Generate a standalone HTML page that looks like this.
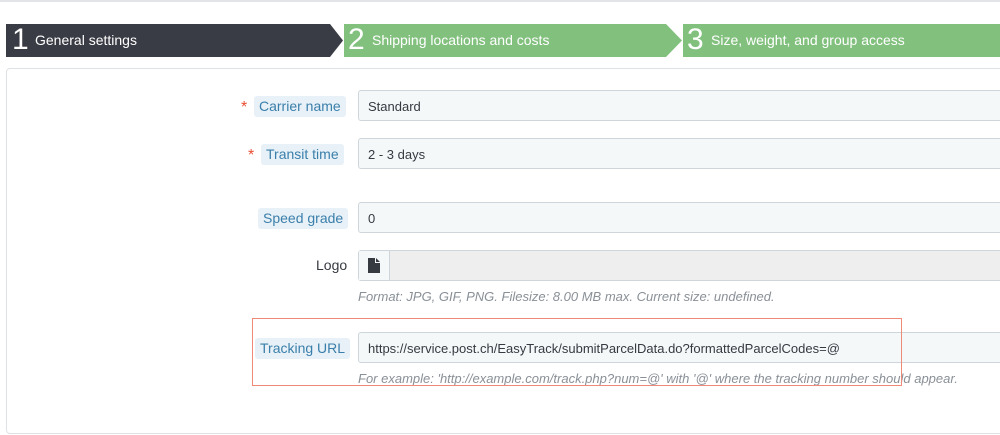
<!DOCTYPE html><html><head><style>
body{margin:0;width:1000px;height:435px;overflow:hidden;background:#fff;font-family:"Liberation Sans",sans-serif;position:relative}
.a{position:absolute}
.topl{left:0;top:0;width:1000px;height:2px;background:#e2e4e7}
.step{position:absolute;top:24px;height:33px;color:#fff;font-size:14px;line-height:33px}
.num{font-size:30px;font-weight:300;position:absolute;top:-1px}
.panel{left:6px;top:68px;width:1010px;height:364px;border:1px solid #dfe2e5;border-radius:4px}
.inp{position:absolute;left:358px;width:660px;height:31px;background:#f5f8f9;border:1px solid #cfd6db;border-radius:3px;font-size:13px;color:#363a41;line-height:31px;padding-left:9px;box-sizing:border-box}
.lbl{position:absolute;font-size:14px;color:#3a7fab;background:#e8f1f7;border-radius:3px;padding:0 5px;height:21px;line-height:21px}
.star{position:absolute;color:#e84e33;font-size:16px}
.help{position:absolute;left:358px;font-size:13px;font-style:italic;color:#8a9097;white-space:nowrap}
</style></head><body>
<div class="a topl"></div>
<svg class="a" style="left:0;top:24px" width="1000" height="33">
<polygon points="6,0 330,0 343,16.5 330,33 6,33" fill="#393c44"/>
<polygon points="344,0 666,0 682,16.5 666,33 344,33 344,33" fill="#82c07e"/>
<polygon points="683,0 1000,0 1000,33 683,33" fill="#82c07e"/>
</svg>
<div class="step" style="left:12px"><span class="num">1</span><span style="position:absolute;left:23px;white-space:nowrap">General settings</span></div>
<div class="step" style="left:348px"><span class="num">2</span><span style="position:absolute;left:24px;white-space:nowrap">Shipping locations and costs</span></div>
<div class="step" style="left:687px"><span class="num">3</span><span style="position:absolute;left:24px;white-space:nowrap">Size, weight, and group access</span></div>
<div class="a panel"></div>
<span class="star" style="left:241px;top:99px">*</span><div class="lbl" style="left:254px;top:96px">Carrier name</div>
<div class="inp" style="top:90px">Standard</div>
<span class="star" style="left:248px;top:147px">*</span><div class="lbl" style="left:261px;top:144px">Transit time</div>
<div class="inp" style="top:138px">2 - 3 days</div>
<div class="lbl" style="left:258px;top:208px">Speed grade</div>
<div class="inp" style="top:202px">0</div>
<div class="a" style="left:316px;top:257px;font-size:14px;color:#363a41">Logo</div>
<div class="inp" style="top:250px;background:#eeeeee;padding:0"><div style="position:absolute;left:0;top:0;width:30px;height:29px;background:#f5f8f9;border-right:1px solid #cfd6db"></div>
<svg class="a" style="left:9px;top:7px" width="12" height="15"><path d="M0 0H7V5H12V15H0Z M8 0L12 4H8Z" fill="#363a41"/></svg></div>
<div class="help" style="top:289px">Format: JPG, GIF, PNG. Filesize: 8.00 MB max. Current size: undefined.</div>
<div class="lbl" style="left:255px;top:338px">Tracking URL</div>
<div class="inp" style="top:332px">https://service.post.ch/EasyTrack/submitParcelData.do?formattedParcelCodes=@</div>
<div class="help" style="top:371px">For example: 'http://example.com/track.php?num=@' with '@' where the tracking number should appear.</div>
<div class="a" style="left:252px;top:318px;width:648px;height:66px;border:1px solid #ef8a78"></div>
</body></html>
